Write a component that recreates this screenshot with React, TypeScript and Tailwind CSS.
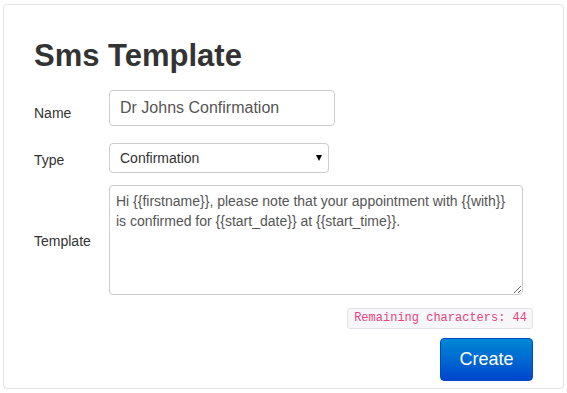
import React from "react";

const font = { fontFamily: '"Liberation Sans", Arial, sans-serif' };

export default function App() {
  return (
    <div className="w-[567px] h-[393px] bg-white pt-[4px] pl-[3px]" style={font}>
      <div className="w-[561px] h-[385px] border border-[#e3e3e3] rounded-[4px] pl-[30px] pr-[30px] pt-[31px] text-[#333]">
        <h1 className="text-[31px] leading-[40px] font-bold text-[#333]">Sms Template</h1>

        <div className="mt-[14px] flex items-center">
          <label className="w-[75px] text-[14px] pt-[10px]">Name</label>
          <input
            defaultValue="Dr Johns Confirmation"
            className="w-[226px] h-[36px] border border-[#ccc] rounded-[4px] px-[10px] text-[16px] text-[#555] outline-none"
            style={font}
          />
        </div>

        <div className="mt-[17px] flex items-center">
          <label className="w-[75px] text-[14px] pt-[4px]">Type</label>
          <div className="relative">
            <select
              defaultValue="Confirmation"
              className="appearance-none w-[220px] h-[30px] border border-[#ccc] rounded-[4px] pl-[10px] text-[14px] text-[#333] bg-white outline-none"
              style={font}
            >
              <option>Confirmation</option>
              <option>Reminder</option>
              <option>Cancellation</option>
            </select>
            <span className="absolute right-[7px] top-[12px] w-0 h-0 border-l-[3.5px] border-r-[3.5px] border-t-[6px] border-l-transparent border-r-transparent border-t-black pointer-events-none" />
          </div>
        </div>

        <div className="mt-[12px] flex items-center">
          <label className="w-[75px] text-[14px] pt-[3px]">Template</label>
          <textarea
            spellCheck={false}
            defaultValue={"Hi {{firstname}}, please note that your appointment with {{with}} is confirmed for {{start_date}} at {{start_time}}."}
            className="w-[414px] h-[110px] border border-[#ccc] rounded-[4px] px-[6px] pt-[5px] text-[14px] leading-[20px] text-[#555] outline-none"
            style={font}
          />
        </div>

        <div className="mt-[13px] flex justify-end">
          <code
            className="h-[21px] pl-[6px] pr-[5px] border border-[#e1e1e8] bg-[#f7f7f9] rounded-[3px] text-[12px] leading-[19px] text-[#e8437e]"
            style={{ fontFamily: '"Liberation Mono", "Courier New", monospace' }}
          >
            Remaining characters: 44
          </code>
        </div>

        <div className="mt-[9px] flex justify-end">
          <button className="w-[93px] h-[43px] rounded-[4px] border border-[#0048c4] bg-linear-to-b from-[#0088d4] to-[#0044cc] text-white text-[18px]" style={font}>
            Create
          </button>
        </div>
      </div>
    </div>
  );
}
